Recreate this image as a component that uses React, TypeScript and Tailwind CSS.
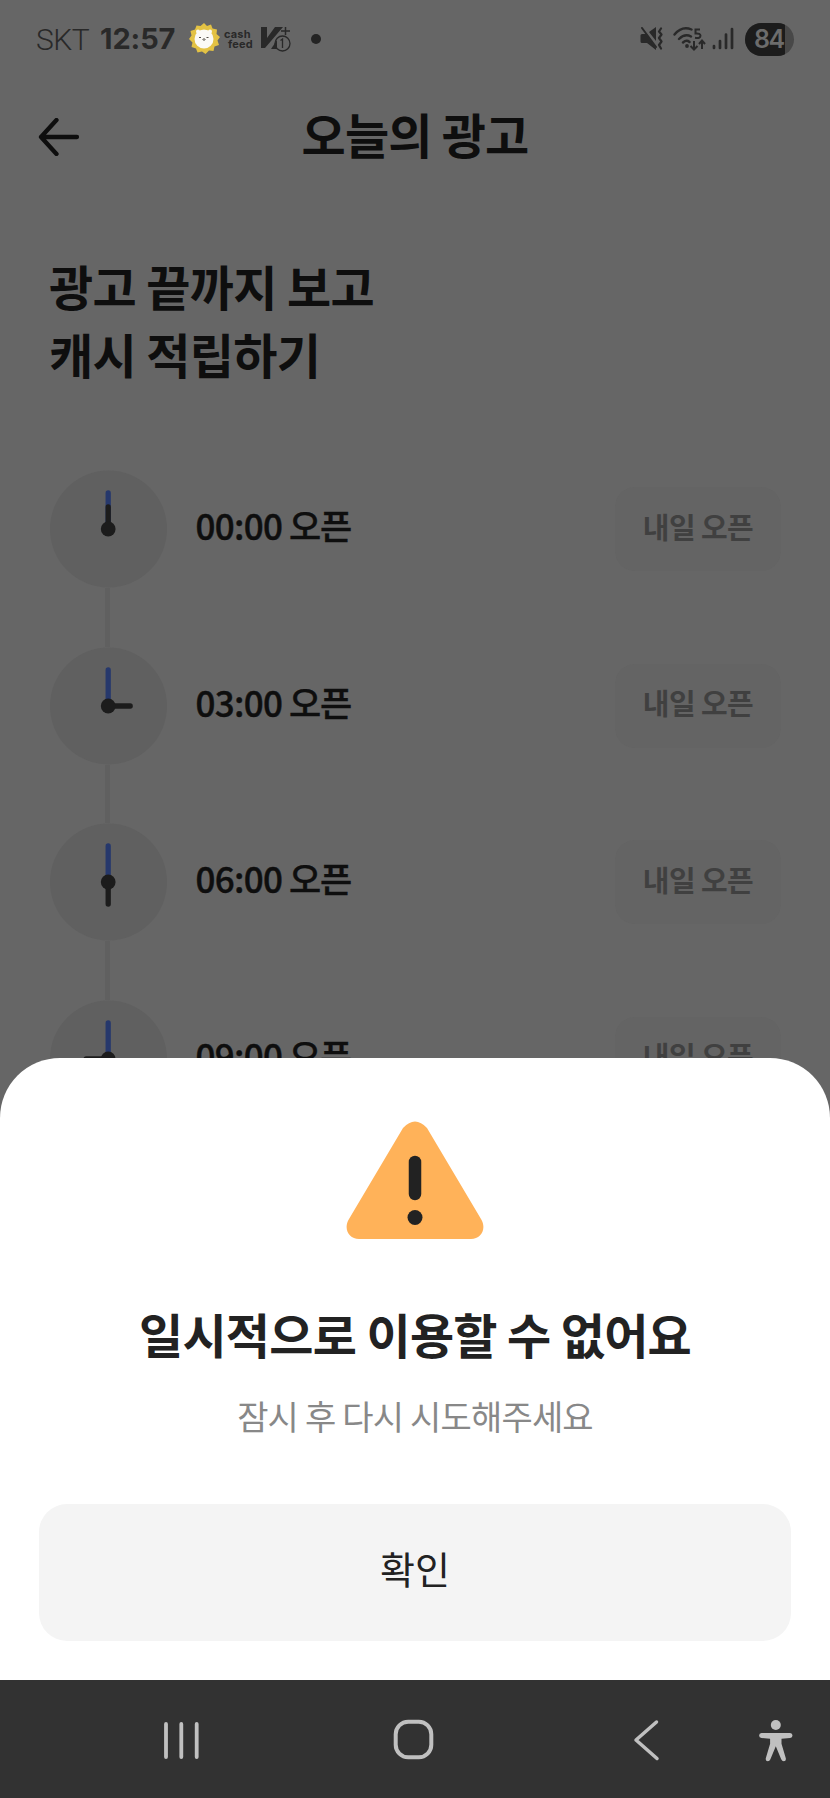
const openTimes = [
  { time: '00:00', angle: 0 },
  { time: '03:00', angle: 90 },
  { time: '06:00', angle: 180 },
  { time: '09:00', angle: 270 },
];

function StatusBar() {
  return (
    <div className="flex h-[78px] items-center pl-[36px] pr-[36px] text-[#292929]">
      <span className="w-[64px] font-['Roboto'] text-[30px] font-light tracking-[-0.5px] text-[#292929]">SKT</span>
      <span className="w-[88px] font-['Inter'] text-[29px] font-bold tracking-[-0.1px]">12:57</span>

      {/* Notification icons */}
      <svg className="h-8 w-8" viewBox="0 0 32 32">
        <path
          d="M16 0l3 3 4-1.500 1.500 4 4.500 1-.500 4.500 3.500 3-2.500 3.500 1.500 4.500-4.500 1.500-1 4.500-4.500-.500-3.500 3.500-3.500-2.500-4.500 1-1.500-4-4.500-1.500 1-4.500-3.500-3.500 2.500-3.500-1-4.500 4.500-1.500 1.500-4 4 .500z"
          fill="#e3c244"
        />
        <circle cx="16" cy="16" r="9.500" fill="#fbfaf6" />
        <circle cx="10" cy="8.500" r="2" fill="#fbfaf6" />
        <circle cx="22" cy="8.500" r="2" fill="#fbfaf6" />
        <path d="M11 14.500h2M18.500 14.500h2M14.500 16.500q1.500 1.500 3 0M16 15v1.500" stroke="#55504a" fill="none" />
      </svg>
      <div className="ml-[4px] w-[34px] font-['Inter'] text-[11px] leading-[10px] font-bold tracking-[0.2px]">
        <div>cash</div>
        <div className="pl-[4px]">feed</div>
      </div>
      <svg className="ml-[3px] h-[26px] w-[32px]" viewBox="0 0 32 26">
        <path d="M0 1h6v11L14 1h8L4 22H0z" fill="#292929" />
        <path d="M10 23l6-9v9z" fill="#292929" />
        <path d="M20 5h9M24.500 1v8" stroke="#292929" strokeWidth="1.500" />
        <circle cx="21.500" cy="17.500" r="7.500" fill="none" stroke="#292929" strokeWidth="1.300" />
        <path d="M19.500 14.500l2-1.500v9" fill="none" stroke="#292929" strokeWidth="1.300" />
      </svg>
      <span className="ml-[18px] h-[10px] w-[10px] rounded-full bg-[#242424]"></span>

      {/* Device state */}
      <svg className="ml-auto h-6 w-6" viewBox="0 0 24 24" fill="none" stroke="#292929">
        <path d="M2 7h4l10 14v2L7 16H2q-1.500 0-1.500-1.500V8.500Q.500 7 2 7zM9 5l7-5v14z" fill="#292929" stroke="none" />
        <path d="M2 1l14 19" strokeWidth="2" strokeLinecap="round" />
        <path d="M21 1.500l-2 3 2.500 3-2.500 3.500 2.500 3.500-2.500 3.500 2 3.500" strokeWidth="2.200" strokeLinecap="round" strokeLinejoin="round" />
      </svg>
      <svg className="ml-[9px] h-[26px] w-[33px]" viewBox="0 0 33 26" fill="none" stroke="#292929" strokeWidth="2.400">
        <path d="M1.500 8.500Q9-.500 18.500 3.500M6 13q6-6 12-2.500M10 16.500q3.500-3 6.500-.500" strokeLinecap="round" />
        <circle cx="14" cy="20" r="1.900" fill="#292929" stroke="none" />
        <path d="M27 3.500h-4.500V7.500q5-.500 5 2.300t-5.500 2M21 15v8.500m-3.500-3.500l3.500 3.500 3.500-3.500M29 23v-8.500m-3 3.500l3-3.500 3 3.500" strokeWidth="2" />
      </svg>
      <svg className="ml-[6px] h-[24px] w-[22px]" viewBox="0 0 22 24" stroke="#292929" strokeWidth="2.700" strokeLinecap="round">
        <path d="M2 19v2M8 14v7M14 7.500v13.500M20 2v19" />
      </svg>
      <div className="ml-[11px] flex h-[33px] w-[49px] items-center overflow-hidden rounded-full bg-[#484848]">
        <span className="h-full w-[40px] bg-[#1c1c1c] pl-[9px] font-['Inter'] text-[25px] leading-[33px] font-semibold tracking-[-1.500px] text-[#6c6c6c]">84</span>
      </div>
    </div>
  );
}

function Clock({ angle }: { angle: number }) {
  return (
    <svg className="h-[118px] w-[117px]" viewBox="0 0 117 118" strokeWidth="5.300" strokeLinecap="round">
      <circle cx="58.500" cy="59" r="58.500" fill="#606060" />
      <path d="M58.200 59V23" stroke="#26386c" />
      <path d="M58.200 59V37" stroke="#1c1c1c" transform={`rotate(${angle} 58.200 59)`} />
      <circle cx="58.200" cy="59" r="7.400" fill="#1c1c1c" />
    </svg>
  );
}

function NavigationBar() {
  return (
    <nav className="flex h-[118px] shrink-0 items-center bg-[#323232] pt-[2px] pl-[161px] pr-[37px]">
      <svg className="h-[40px] w-[40px]" viewBox="0 0 40 40" stroke="#c0c0c0" strokeWidth="3.800" strokeLinecap="round">
        <path d="M5 4v33M20.300 4v33M35.700 4v33" />
      </svg>
      <svg className="ml-[192px] h-[42px] w-[42px]" viewBox="0 0 42 42">
        <rect x="2.700" y="2.700" width="35.600" height="35.600" rx="12.500" fill="none" stroke="#c0c0c0" strokeWidth="4" />
      </svg>
      <svg className="ml-[196px] h-[42px] w-[30px]" viewBox="0 0 30 42" fill="none" stroke="#c0c0c0" strokeWidth="3.500" strokeLinecap="round" strokeLinejoin="round">
        <path d="M25.500 3L5 21l21 18.500" />
      </svg>
      <svg className="ml-auto h-[43px] w-[34px]" viewBox="0 0 34 43" fill="#c0c0c0">
        <circle cx="16.800" cy="6" r="5" />
        <path d="M2.500 14h28.600q2.400.200 2.400 2.400t-2.400 2.600l-8.600.800v5l4.300 14.500q.500 2.800-2 3-1.800 0-2.600-2l-5.400-13-5.400 13q-.800 2-2.600 2-2.500-.200-2-3l4.300-14.500v-5l-8.600-.800q-2.400-.400-2.400-2.600t2.400-2.400z" />
      </svg>
    </nav>
  );
}

export default function App() {
  return (
    <div className="relative flex h-[1798px] w-[830px] flex-col justify-between overflow-hidden bg-[#666] font-['Noto_Sans_CJK_KR',sans-serif] text-[#0e0e0e]">
      <div className="h-[1058px]">
        <StatusBar />

        <header className="grid h-[118px] grid-cols-[1fr_auto_1fr] items-center px-[38px]">
          <svg className="h-[38px] w-[42px]" viewBox="0 0 42 38" fill="none" stroke="#0e0e0e" strokeWidth="4.300" strokeLinecap="round" strokeLinejoin="round">
            <path d="M18.500 2L3 19l15.500 17M3 19h36" />
          </svg>
          <h1 className="pb-[8px] text-[48px] leading-[68px] font-bold tracking-[-0.8px]">오늘의 광고</h1>
        </header>

        <h2 className="mt-[55px] pl-[49px] text-[48px] leading-[68px] font-bold tracking-[-0.65px]">
          광고 끝까지 보고
          <br />
          캐시 적립하기
        </h2>

        {/* Opening times */}
        <ul className="mt-[83px] pl-[49.500px] pr-[49px]">
          {openTimes.map(({ time, angle }) => (
            <li key={time} className="flex h-[176.500px]">
              <div className="flex flex-col items-center">
                <Clock angle={angle} />
                <div className="mr-px w-[4.500px] flex-1 bg-[#606060]"></div>
              </div>
              <div className="flex h-[118px] flex-1 items-center justify-between pl-[29px]">
                <span className="pb-[7px] text-[35px] font-medium tracking-[-1.100px] [-webkit-text-stroke:0.4px]">
                  <span className="tracking-[-0.7px]">{time}</span> 오픈
                </span>
                <span className="flex h-[84px] w-[166px] items-center justify-center rounded-[20px] bg-[#646464] pb-[5px] text-[29px] font-bold tracking-[-0.6px] text-[#404040]">
                  내일 오픈
                </span>
              </div>
            </li>
          ))}
        </ul>
      </div>

      {/* Bottom sheet */}
      <div className="z-10 flex h-[740px] flex-col">
        <section className="flex flex-1 flex-col items-center rounded-t-[60px] bg-white px-[39px] pt-[63px] text-[#222]">
          <svg className="h-[120px] w-[138px]" viewBox="0 0 138 120">
            <path d="M57 7q12-13 24 0l54 91c6 10 0 20-10 20H13C3 118-3 108 3 98z" fill="#ffb259" />
            <path d="M69 41v32" stroke="#222" strokeWidth="12.500" strokeLinecap="round" />
            <circle cx="69" cy="96.500" r="7.500" fill="#222" />
          </svg>
          <h3 className="mt-[58px] text-[48px] leading-[68px] font-bold tracking-[-0.7px]">일시적으로 이용할 수 없어요</h3>
          <p className="mt-[23.500px] text-[34px] leading-[50px] tracking-[-0.8px] text-[#888]">잠시 후 다시 시도해주세요</p>
          <button className="mt-[63px] h-[137px] w-full rounded-[28px] bg-[#f4f4f4] pb-[9px] text-[38px]">확인</button>
        </section>
        <NavigationBar />
      </div>
    </div>
  );
}
